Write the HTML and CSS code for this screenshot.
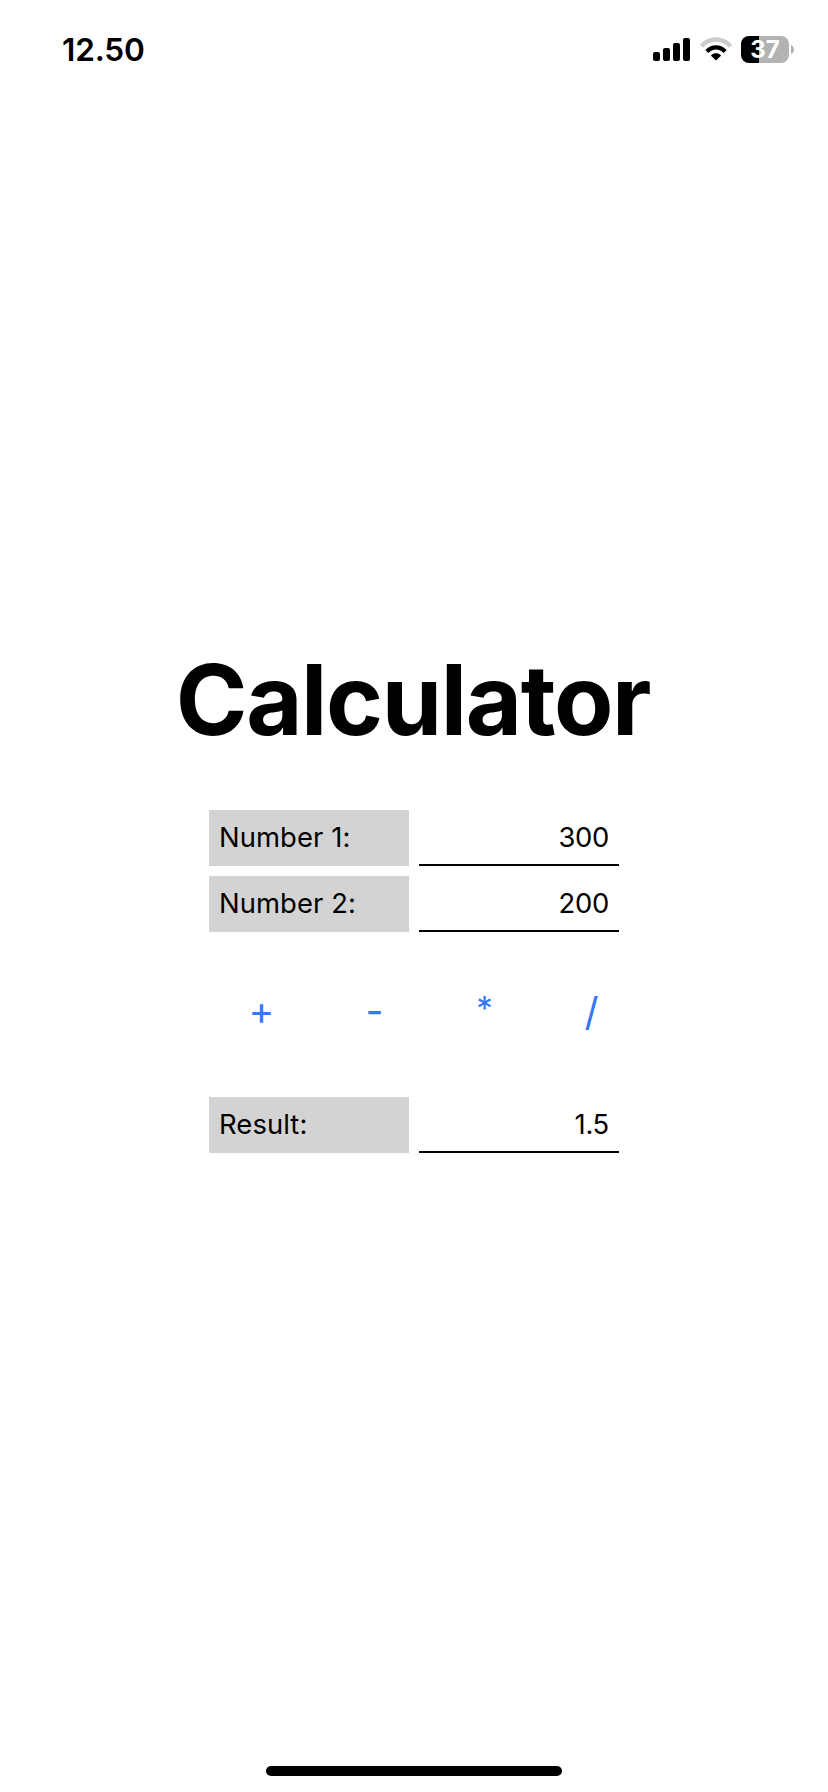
FILE: index.html
```html
<!DOCTYPE html>
<html lang="en">
<head>
<meta charset="utf-8">
<title>Calculator</title>
<link rel="stylesheet" href="styles.css">
</head>
<body>
<div class="screen">
  <header class="status">
    <span class="time">12.50</span>
    <div class="indicators">
      <svg class="signal" width="38" height="24" viewBox="0 0 38 24">
        <rect x="0" y="14" width="7" height="9" rx="2"/>
        <rect x="10" y="10" width="7" height="13" rx="2"/>
        <rect x="20" y="5" width="7" height="18" rx="2"/>
        <rect x="30" y="0" width="7" height="23" rx="2"/>
      </svg>
      <svg class="wifi" width="32" height="24" viewBox="0 0 32 24">
        <path fill="#cbcbcb" d="M.4 7.1C9-2.2 23-2.2 31.6 7.1q.5.6 0 1.1l-2 2q-.5.5-1 0C21.500 3 10.500 3 3.400 10.200q-.5.5-1 0l-2-2q-.5-.500 0-1.100Z"/>
        <path d="M5.800 12.500C11.500 6.700 20.500 6.700 26.200 12.500q.5.600 0 1.100l-2.100 2q-.5.500-1 0C19 11.500 13 11.500 8.900 15.600q-.5.500-1 0l-2.100-2q-.5-.500 0-1.100Z"/>
        <path d="M11.300 18.100C14 15.500 18 15.500 20.700 18.100q.5.500 0 1L16.500 23q-.5.500-1 0l-4.200-3.900q-.5-.500 0-1Z"/>
      </svg>
      <div class="battery"><span class="level">37</span><svg class="tip" width="3" height="9" viewBox="0 0 3 9"><path d="M0 0Q3 1.500 3 4.500T0 9Z" fill="#b3b3b3"/></svg></div>
    </div>
  </header>
  <main class="calculator">
    <h1 class="title">Calculator</h1>
    <div class="fields">
      <div class="row"><span class="label">Number 1:</span><span class="value">300</span></div>
      <div class="row"><span class="label">Number 2:</span><span class="value">200</span></div>
    </div>
    <div class="operators">
      <span class="op">+</span>
      <span class="op minus">-</span>
      <span class="op times">*</span>
      <span class="op slash">/</span>
    </div>
    <div class="row"><span class="label">Result:</span><span class="value">1.5</span></div>
  </main>
  <div class="home"></div>
</div>
</body>
</html>
```
FILE: styles.css
```css
* { box-sizing: border-box; }
body { margin: 0; background: #fff; color: #000; font-family: Inter, "Liberation Sans", sans-serif; }
.screen { width: 828px; height: 1792px; display: flex; flex-direction: column; align-items: center; overflow: hidden; }
.status { width: 100%; height: 100px; flex: none; display: flex; justify-content: space-between; align-items: flex-start; padding: 36px 34px 0 62px; }
.time { font-size: 31.6px; line-height: 28px; font-weight: 600; letter-spacing: -0.2px; }
.indicators { display: flex; align-items: flex-start; }
.signal { margin: 2px 9px 0 0; }
.wifi { margin: 1px 9px 0 0; }
.battery { display: flex; align-items: center; gap: 2px; }
.level { width: 48px; height: 27px; border-radius: 8px; background: linear-gradient(90deg, #000 18px, #b3b3b3 18px); color: #fff; font-size: 24px; font-weight: 700; line-height: 27px; text-align: center; }
.calculator { display: flex; flex-direction: column; align-items: center; padding-top: 540px; }
.title { margin: 0; padding-right: 2px; height: 120px; line-height: 120px; font-size: 97px; font-weight: 700; letter-spacing: -1.35px; white-space: nowrap; }
.fields { display: flex; flex-direction: column; gap: 10px; margin-top: 50px; }
.row { display: flex; gap: 10px; }
.label, .value { width: 200px; height: 56px; padding: 0 10px; font-size: 27.4px; line-height: 54px; }
.label { background: #d3d3d3; letter-spacing: 0.1px; }
.value { border-bottom: 2px solid #000; text-align: right; letter-spacing: -0.3px; }
.operators { display: grid; grid-template-columns: 113px 113px 107px 107px; height: 165px; align-items: center; margin-left: 22px; padding-bottom: 8px; }
.op { color: #3478f6; font-size: 39px; line-height: 40px; text-align: center; }
.times { font-size: 33px; line-height: 34px; padding-bottom: 5px; }
.slash { padding-top: 2px; }
.home { width: 296px; height: 10px; margin: auto 0 16px; border-radius: 5px; background: #000; flex: none; }
```
